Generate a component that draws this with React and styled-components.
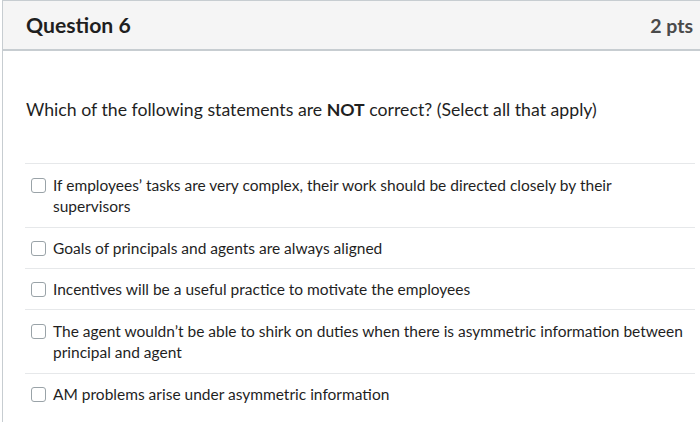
import React from "react";
import styled, { createGlobalStyle } from "styled-components";

const Global = createGlobalStyle`
  html, body {
    margin: 0;
    padding: 0;
    background: #ffffff;
    overflow: hidden;
  }
  body {
    font-family: Lato, "Open Sans", "Liberation Sans", sans-serif;
    color: #2d3b45;
  }
`;

const Page = styled.div`
  padding-left: 2px;
  height: 422px;
`;

const Card = styled.div`
  width: 697px;
  height: 421px;
  border-top: 1px solid #c7cdd1;
  border-left: 1px solid #c7cdd1;
  background: #ffffff;
`;

const Header = styled.div`
  height: 48px;
  display: flex;
  align-items: center;
  justify-content: space-between;
  padding: 0 7px 0 23px;
  background: #f5f5f5;
  border-bottom: 2px solid #c7cdd1;
`;

const Title = styled.h2`
  margin: 0;
  font-size: 21.2px;
  font-weight: 700;
  color: #1f1f1f;
`;

const Points = styled.span`
  font-size: 19.5px;
  font-weight: 700;
  color: #4a4a4a;
`;

const Body = styled.div`
  padding: 47px 5px 0 22px;
`;

const Prompt = styled.p`
  margin: 0 0 41px 1px;
  font-size: 17.7px;
  line-height: 24px;
  color: #1f1f1f;
`;

const Answers = styled.div`
  display: flex;
  flex-direction: column;
`;

const Answer = styled.label`
  display: flex;
  align-items: flex-start;
  gap: 7px;
  padding: ${(p) => (p.$tall ? "10.5px" : "9.5px")} 7px
    ${(p) => (p.$tall ? "10.5px" : "9.5px")} 6px;
  border-top: 1px solid #e6e8ea;
  font-size: 15.5px;
  line-height: 21px;
  color: #1f1f1f;
`;

const Box = styled.span`
  flex: none;
  width: 13px;
  height: 13px;
  margin-top: 3px;
  border: 1px solid #9aa3a8;
  border-radius: 3px;
  background: #ffffff;
`;

const options = [
  "If employees\u2019 tasks are very complex, their work should be directed closely by their supervisors",
  "Goals of principals and agents are always aligned",
  "Incentives will be a useful practice to motivate the employees",
  "The agent wouldn\u2019t be able to shirk on duties when there is asymmetric information between principal and agent",
  "AM problems arise under asymmetric information",
];

export default function App() {
  return (
    <>
      <Global />
      <Page>
        <Card>
          <Header>
            <Title>Question 6</Title>
            <Points>2 pts</Points>
          </Header>
          <Body>
            <Prompt>
              Which of the following statements are <b>NOT</b> correct? (Select
              all that apply)
            </Prompt>
            <Answers>
              {options.map((text, i) => (
                <Answer key={i} $tall={text.length > 80}>
                  <Box />
                  <span>{text}</span>
                </Answer>
              ))}
            </Answers>
          </Body>
        </Card>
      </Page>
    </>
  );
}
